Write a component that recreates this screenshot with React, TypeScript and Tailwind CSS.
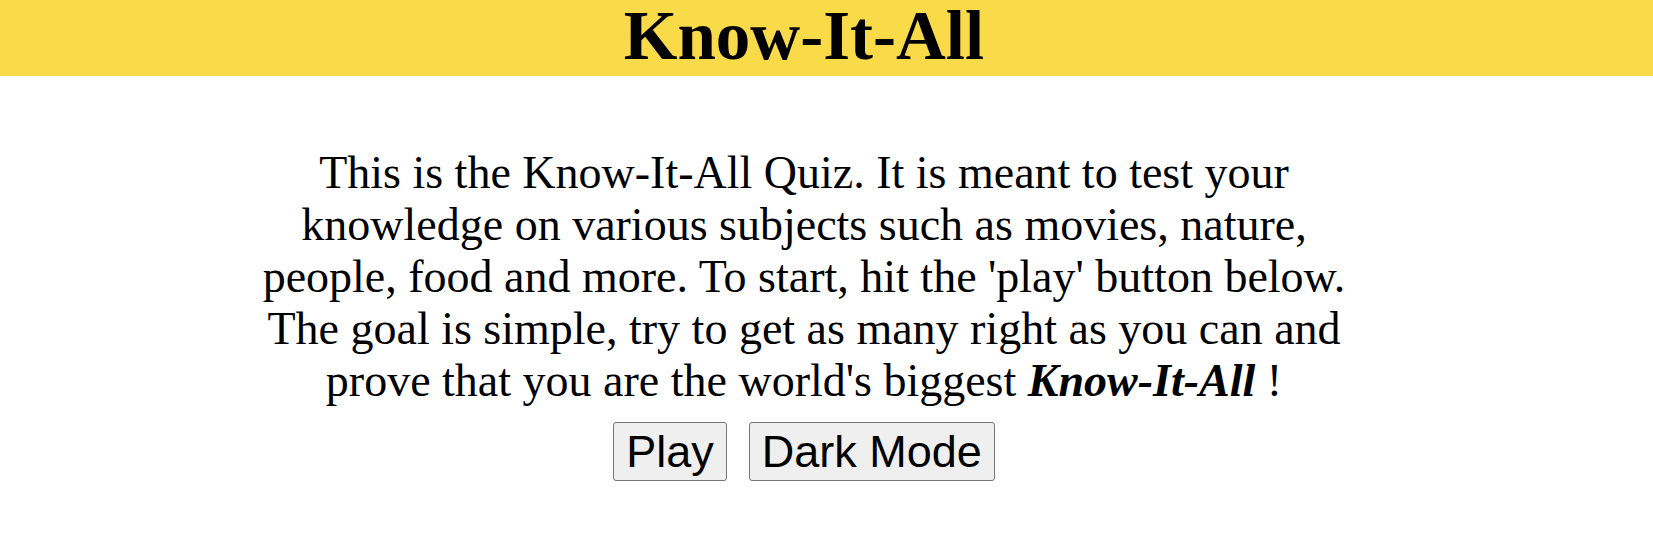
export default function App() {
  return (
    <div className="min-h-screen bg-white text-black font-['Liberation_Serif','Times_New_Roman',serif]">
      <header className="h-[76px] bg-[#f9db4a] flex justify-center pr-[45px]">
        <h1 className="text-[69px] font-bold leading-[73px]">Know-It-All</h1>
      </header>
      <main className="flex flex-col items-center pr-[45px]">
        <p className="mt-[71px] w-[1100px] text-center text-[46px] leading-[52px]">
          This is the Know-It-All Quiz. It is meant to test your knowledge on various subjects such as movies, nature, people, food and more. To start, hit the 'play' button below. The goal is simple, try to get as many right as you can and prove that you are the world's biggest <b><i>Know-It-All</i></b> !
        </p>
        <div className="mt-[15px] flex gap-[22px] font-['Liberation_Sans',Arial,sans-serif] text-[45px] leading-[51px]">
          <button className="px-[12px] py-[3px] bg-[#efefef] border border-[#767676] rounded-[3px]">Play</button>
          <button className="px-[12px] py-[3px] bg-[#efefef] border border-[#767676] rounded-[3px]">Dark Mode</button>
        </div>
      </main>
    </div>
  );
}
